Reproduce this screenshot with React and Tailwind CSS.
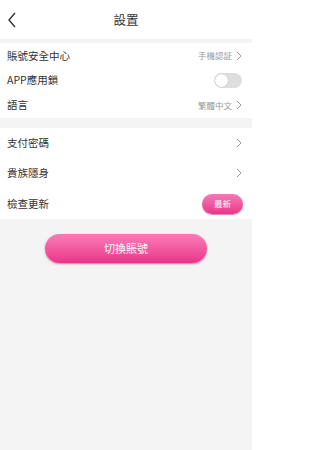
import React, { useState } from 'react';

const Chevron = () => (
    <svg width="6" height="10" viewBox="0 0 6 10" className="shrink-0">
        <path d="M1 1 L5 5 L1 9" fill="none" stroke="#9a9a9a" strokeWidth="1" />
    </svg>
);

const Row = ({ label, children, h }) => (
    <div className={`flex items-center justify-between pl-[7px] pr-[10px] ${h}`}>
        <span className="text-[10.5px] text-[#333]">{label}</span>
        <div className="flex items-center gap-[4px]">{children}</div>
    </div>
);

const Hint = ({ text }) => <span className="text-[8.5px] text-[#999]">{text}</span>;

const Toggle = ({ on, onChange }) => (
    <button
        onClick={() => onChange(!on)}
        className={`relative w-[28px] h-[15px] rounded-full ${on ? 'bg-[#f0468f]' : 'bg-[#dedede]'}`}
    >
        <span
            className={`absolute top-[1px] w-[13px] h-[13px] rounded-full bg-white shadow-[0_0_1px_rgba(0,0,0,0.3)] ${on ? 'left-[14px]' : 'left-[1px]'}`}
        />
    </button>
);

export default function App() {
    const [locked, setLocked] = useState(false);

    return (
        <div
            className="w-[252px] h-[450px] bg-[#f4f4f4] flex flex-col"
            style={{ fontFamily: '"Noto Sans CJK TC", "Noto Sans", sans-serif' }}
        >
            {/* header */}
            <div className="h-[39px] bg-white flex items-center relative">
                <svg width="10" height="16" viewBox="0 0 10 16" className="ml-[7px]">
                    <path d="M8 1 L2 8 L8 15" fill="none" stroke="#333" strokeWidth="1.4" />
                </svg>
                <span className="absolute left-0 right-0 top-[11px] text-center text-[12.5px] text-[#333] pointer-events-none">設置</span>
            </div>

            <div className="mt-[4px] bg-white">
                <Row label="賬號安全中心" h="h-[25px]">
                    <Hint text="手機認証" />
                    <Chevron />
                </Row>
                <Row label="APP應用鎖" h="h-[24px]">
                    <Toggle on={locked} onChange={setLocked} />
                </Row>
                <Row label="語言" h="h-[26px]">
                    <Hint text="繁體中文" />
                    <Chevron />
                </Row>
            </div>

            <div className="mt-[10px] bg-white">
                <Row label="支付密碼" h="h-[30px]">
                    <Chevron />
                </Row>
                <Row label="貴族隱身" h="h-[30px]">
                    <Chevron />
                </Row>
                <Row label="檢查更新" h="h-[31px]">
                    <button className="w-[41px] h-[20px] -mr-[1px] rounded-full bg-gradient-to-b from-[#f877b4] to-[#e8358a] text-white text-[8.5px] shadow-[0_1px_1px_rgba(150,20,80,0.5)]">
                        最新
                    </button>
                </Row>
            </div>

            <div className="flex justify-center mt-[15px]">
                <button className="w-[162px] h-[29px] rounded-full bg-gradient-to-b from-[#f97bb7] to-[#ea3189] text-white text-[11px] shadow-[0_1px_2px_rgba(150,20,80,0.5)]">
                    切換賬號
                </button>
            </div>
        </div>
    );
}
